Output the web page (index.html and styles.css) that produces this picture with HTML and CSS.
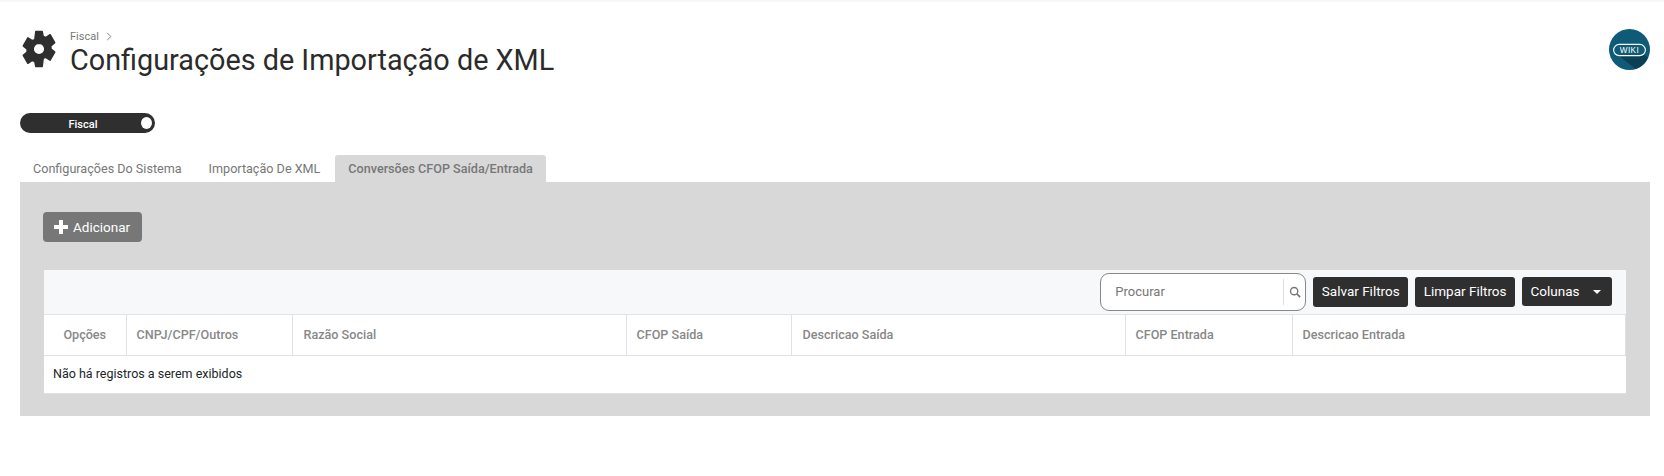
FILE: index.html
```html
<!DOCTYPE html>
<html>
<head>
    <meta charset="utf-8" />
    <title>Configurações de Importação de XML</title>
    <link rel="stylesheet" href="styles.css">
</head>
<body>
    <div class="top_shadow"></div>
    <div class="page">
      <!-- 标题 -->
      <div class="page_head">
        <svg class="gear" viewBox="0 0 24 24"><path fill-rule="evenodd" d="M10 1h4l.6 3.1 1.7.7L19 3l2.9 5-2.4 2.1v1.8l2.4 2.1L19 19l-2.7-1.8-1.7.7L14 23h-4l-.6-3.1-1.7-.7L5 21l-2.900-5 2.400-2.100v-1.800L2.100 10 5 5l2.700 1.800 1.700-.7zM12 8.300a3.700 3.700 0 1 0 0 7.400 3.700 3.700 0 0 0 0-7.400z" stroke="#2f2f2f" stroke-width="1" stroke-linejoin="round" fill="#2f2f2f"/></svg>
        <div class="head_text">
          <div class="crumb">Fiscal
            <svg class="crumb_sep" viewBox="0 0 6 10"><path d="M1 1l4 4-4 4" fill="none" stroke="#777" stroke-width="1"/></svg>
          </div>
          <h1>Configurações de Importação de XML</h1>
        </div>
        <svg class="wiki" viewBox="0 0 40 40">
          <circle cx="20" cy="20" r="20" fill="#0f5a76"/>
          <path d="M7 24 L26 39 A20 20 0 0 0 38 28 L33 24 Z" fill="#0a3f55"/>
          <rect x="4.500" y="15" width="31" height="11" rx="5.500" fill="#0f5a76" stroke="#fff" stroke-width="1.100"/>
          <text x="20" y="23.500" text-anchor="middle" class="wiki_text">WIKI</text>
        </svg>
      </div>

      <div class="toggle">
        <span class="toggle_label">Fiscal</span>
        <span class="toggle_dot"></span>
      </div>

      <!-- 选项卡 -->
      <ul class="tabs">
        <li>Configurações Do Sistema</li>
        <li>Importação De XML</li>
        <li class="cur">Conversões CFOP Saída/Entrada</li>
      </ul>

      <div class="panel">
        <button class="add_btn">
          <svg class="plus" viewBox="0 0 16 16"><path d="M6 1h4v5h5v4h-5v5H6v-5H1V6h5z" fill="#fff"/></svg>
          Adicionar
        </button>

        <div class="grid_box">
          <div class="toolbar">
            <div class="search">
              <span class="search_text">Procurar</span>
              <span class="search_icon">
                <svg viewBox="0 0 14 14"><circle cx="6" cy="6" r="4.200" fill="none" stroke="#777" stroke-width="1.600"/><path d="M9.200 9.200L13 13" stroke="#777" stroke-width="1.800"/></svg>
              </span>
            </div>
            <button class="dark_btn">Salvar Filtros</button>
            <button class="dark_btn">Limpar Filtros</button>
            <button class="dark_btn columns_btn">Colunas <span class="caret"></span></button>
          </div>
          <table>
            <thead>
              <tr>
                <th class="col_opt">Opções</th>
                <th class="col_doc">CNPJ/CPF/Outros</th>
                <th class="col_name">Razão Social</th>
                <th class="col_cfop">CFOP Saída</th>
                <th class="col_name">Descricao Saída</th>
                <th class="col_cfop2">CFOP Entrada</th>
                <th>Descricao Entrada</th>
              </tr>
            </thead>
            <tbody>
              <tr><td colspan="7">Não há registros a serem exibidos</td></tr>
            </tbody>
          </table>
        </div>
      </div>
    </div>
</body>
</html>
```

FILE: styles.css
```css
* {
  margin: 0;
  padding: 0;
  box-sizing: border-box;
}
body {
  font-family: Roboto, "Liberation Sans", sans-serif;
  background-color: #fff;
  color: #212529;
  overflow: hidden;
}
.top_shadow {
  height: 3px;
  background: linear-gradient(#f4f4f4, #fff);
}
.page {
  padding: 0 14px 0 20px;
}
/* 标题 */
.page_head {
  display: flex;
  align-items: flex-start;
  padding-top: 27px;
  height: 110px;
}
.gear {
  width: 38px;
  height: 38px;
  margin-right: 12px;
  flex-shrink: 0;
}
.head_text {
  flex: 1;
}
.crumb {
  font-size: 11px;
  line-height: 13px;
  color: #777;
}
.crumb_sep {
  width: 6px;
  height: 9px;
  margin-left: 4px;
  vertical-align: -1px;
}
h1 {
  font-size: 28.800px;
  font-weight: 400;
  line-height: 34px;
  color: #2b2b2b;
}
.wiki {
  width: 41px;
  height: 41px;
  margin-top: -1px;
  flex-shrink: 0;
}
.wiki_text {
  font-family: "Liberation Sans", sans-serif;
  font-size: 8px;
  letter-spacing: .4px;
  fill: #fff;
}
/* 开关 */
.toggle {
  display: flex;
  align-items: center;
  width: 135px;
  height: 20px;
  border-radius: 10px;
  background-color: #2f2f2f;
  padding: 0 3px 0 0;
}
.toggle_label {
  flex: 1;
  text-align: center;
  font-size: 11px;
  font-weight: 500;
  color: #fff;
  padding: 2px 0 0 5px;
}
.toggle_dot {
  width: 11px;
  height: 12px;
  border-radius: 50%;
  background-color: #fff;
}
/* 选项卡 */
.tabs {
  display: flex;
  list-style: none;
  margin-top: 22px;
  height: 27px;
}
.tabs li {
  padding: 6px 13px 0;
  margin-right: 1px;
  font-size: 12.600px;
  line-height: 16px;
  color: #777;
}
.tabs li:nth-child(2) {
  margin-right: 2px;
}
.tabs .cur {
  background-color: #d8d8d8;
  border-radius: 3px 3px 0 0;
  font-weight: 500;
}
/* 内容 */
.panel {
  background-color: #d8d8d8;
  height: 234px;
  padding: 30px 24px 0 23px;
}
.add_btn {
  display: flex;
  align-items: center;
  height: 30px;
  width: 99px;
  padding-left: 10px;
  border: none;
  border-radius: 4px;
  background-color: #777;
  color: #fff;
  font-family: inherit;
  font-size: 13.500px;
}
.plus {
  width: 16px;
  height: 16px;
  margin-right: 4px;
}
.grid_box {
  margin: 28px 0 0 1px;
  background-color: #fff;
}
.toolbar {
  display: flex;
  align-items: center;
  justify-content: flex-end;
  height: 45px;
  padding-right: 14px;
  background-color: #f7f8fa;
  border-bottom: 1px solid #e0e3e7;
}
.search {
  display: flex;
  align-items: center;
  width: 206px;
  height: 38px;
  padding: 0 0 0 14px;
  margin-right: 7px;
  border: 1px solid #888;
  border-radius: 9px;
  background-color: #fff;
}
.search_text {
  flex: 1;
  padding-bottom: 1px;
  font-size: 13px;
  color: #777;
}
.search_icon {
  display: flex;
  align-items: center;
  justify-content: center;
  width: 22px;
  height: 26px;
  border-left: 1px solid #ddd;
}
.search_icon svg {
  width: 12px;
  height: 12px;
}
.dark_btn {
  height: 30px;
  padding: 0 8.500px 2px;
  margin-right: 7px;
  border: none;
  border-radius: 3px;
  background-color: #2f2f2f;
  color: #fff;
  font-family: inherit;
  font-size: 13.500px;
}
.columns_btn {
  width: 90px;
  height: 29px;
  margin: 0 0 1px;
  text-align: left;
}
.caret {
  display: inline-block;
  margin-left: 10px;
  vertical-align: middle;
  border-top: 4px solid #fff;
  border-left: 4px solid transparent;
  border-right: 4px solid transparent;
}
table {
  width: 100%;
  table-layout: fixed;
  border-collapse: collapse;
}
th {
  height: 40px;
  padding: 0 10px;
  text-align: left;
  font-size: 12.600px;
  font-weight: 500;
  color: #888;
  border-right: 1px solid #dee2e6;
  border-bottom: 1px solid #dee2e6;
}
.col_opt {
  width: 82px;
  text-align: center;
}
.col_doc {
  width: 166px;
}
.col_name {
  width: 334px;
  padding-left: 11px;
}
.col_cfop {
  width: 165px;
  padding-left: 10px;
}
.col_cfop2 {
  width: 167px;
}
td {
  height: 38px;
  padding: 0 9px 2px;
  font-size: 12.500px;
  color: #212529;
  border-bottom: 1px solid #dee2e6;
}
```
